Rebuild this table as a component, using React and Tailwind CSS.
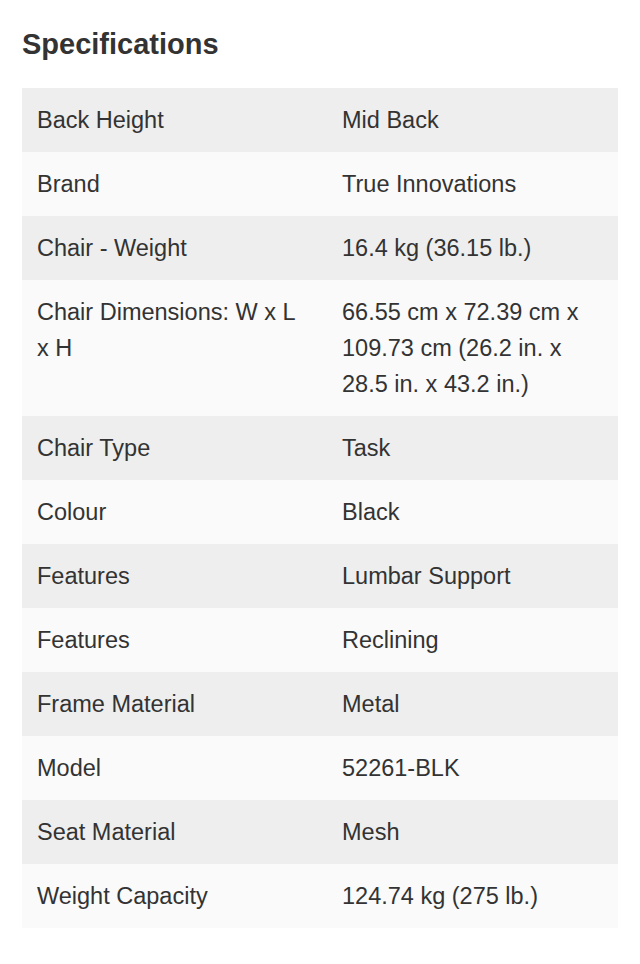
import React from 'react';

const specs = [
  ['Back Height', 'Mid Back'],
  ['Brand', 'True Innovations'],
  ['Chair - Weight', '16.4 kg (36.15 lb.)'],
  ['Chair Dimensions: W x L x H', '66.55 cm x 72.39 cm x 109.73 cm (26.2 in. x 28.5 in. x 43.2 in.)'],
  ['Chair Type', 'Task'],
  ['Colour', 'Black'],
  ['Features', 'Lumbar Support'],
  ['Features', 'Reclining'],
  ['Frame Material', 'Metal'],
  ['Model', '52261-BLK'],
  ['Seat Material', 'Mesh'],
  ['Weight Capacity', '124.74 kg (275 lb.)'],
];

const App = () => {
  return (
    <div
      className="min-h-[964px] bg-white px-[22px] pt-[26px] text-[#333333]"
      style={{ fontFamily: '"Liberation Sans", Arial, sans-serif' }}
    >
      <h2 className="text-[29px] font-bold leading-[36px]">Specifications</h2>

      <div className="mt-[26px] w-[596px]">
        {specs.map(([label, value], index) => (
          <div
            key={index}
            className={`grid grid-cols-[305px_1fr] text-[23.5px] leading-[36px] ${
              index % 2 === 0 ? 'bg-[#eeeeee]' : 'bg-[#fafafa]'
            }`}
          >
            <div className="pl-[15px] pr-[30px] py-[14px]">{label}</div>
            <div className="px-[15px] py-[14px]">{value}</div>
          </div>
        ))}
      </div>
    </div>
  );
};

export default App;
